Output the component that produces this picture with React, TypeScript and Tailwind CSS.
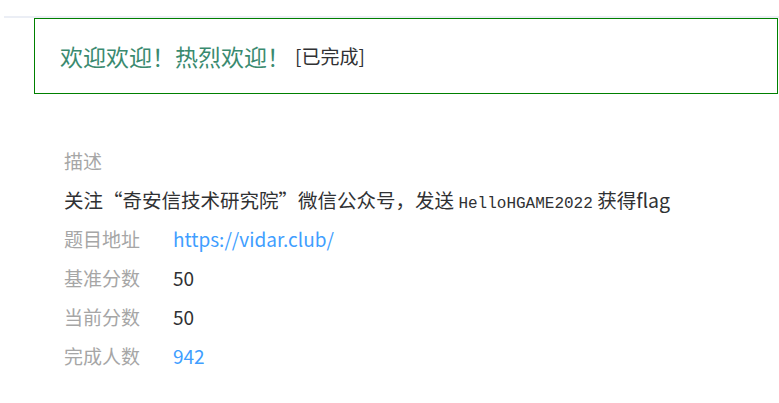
import React from 'react';

const rows = [
  { label: '题目地址', value: 'https://vidar.club/', kind: 'link' },
  { label: '基准分数', value: '50', kind: 'text' },
  { label: '当前分数', value: '50', kind: 'text' },
  { label: '完成人数', value: '942', kind: 'link' },
];

const App: React.FC = () => {
  return (
    <div className="min-h-[403px] bg-white font-['Noto_Sans_CJK_SC',sans-serif] text-[#303133]">
      <div className="pt-4 pl-1">
        <div className="h-[2px] bg-[#ebeef5]" />
      </div>
      <div className="ml-[34px] mr-[1px] h-[76px] border border-[#008000] flex items-center pl-[25px]">
        <span className="text-[23px] text-[#3a8a6f]">欢迎欢迎！热烈欢迎！</span>
        <span className="ml-[5px] text-[19px] text-[#303133]">[已完成]</span>
      </div>

      <div className="pl-[64px] pt-[47px] text-[19px] leading-[39px]">
        <div className="text-[#a6a6a6]">描述</div>
        <div className="text-[19.5px]">
          关注“奇安信技术研究院”微信公众号，发送{' '}
          <code className="font-['Liberation_Mono',monospace] text-[16px] leading-none">HelloHGAME2022</code>{' '}
          获得flag
        </div>
        {rows.map((row) => (
          <div key={row.label} className="flex">
            <span className="w-[109px] text-[#a6a6a6]">{row.label}</span>
            <span className={row.kind === 'link' ? 'text-[#409eff]' : 'text-[#303133]'}>{row.value}</span>
          </div>
        ))}
      </div>
    </div>
  );
};

export default App;
